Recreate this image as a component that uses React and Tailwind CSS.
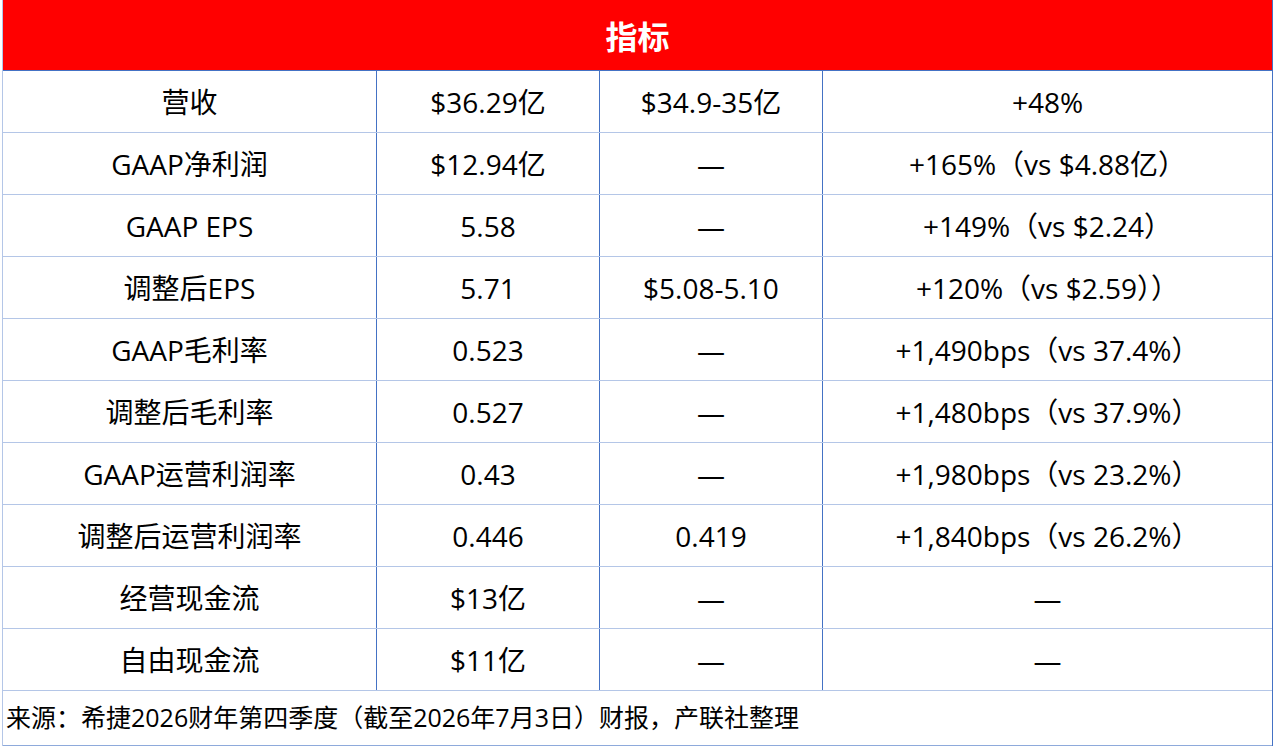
const rows = [
  ["营收", "$36.29亿", "$34.9-35亿", "+48%"],
  ["GAAP净利润", "$12.94亿", "—", "+165%（vs $4.88亿）"],
  ["GAAP EPS", "5.58", "—", "+149%（vs $2.24）"],
  ["调整后EPS", "5.71", "$5.08-5.10", "+120%（vs $2.59））"],
  ["GAAP毛利率", "0.523", "—", "+1,490bps（vs 37.4%）"],
  ["调整后毛利率", "0.527", "—", "+1,480bps（vs 37.9%）"],
  ["GAAP运营利润率", "0.43", "—", "+1,980bps（vs 23.2%）"],
  ["调整后运营利润率", "0.446", "0.419", "+1,840bps（vs 26.2%）"],
  ["经营现金流", "$13亿", "—", "—"],
  ["自由现金流", "$11亿", "—", "—"],
];

export default function App() {
  return (
    <div className="w-[1274px] h-[748px] bg-white font-['Open_Sans','Noto_Sans_CJK_SC',sans-serif] text-black">
      <div className="ml-[2px] w-[1271px] border-l border-r border-l-[#b4c6e7] border-r-[#4472c4]">
        <div className="h-[71px] bg-[#ff0000] border-b border-[#4472c4] flex items-center justify-center">
          <span className="text-white text-[32px] font-bold font-['Noto_Sans_CJK_SC',sans-serif]">指标</span>
        </div>
        {rows.map((r, i) => (
          <div
            key={i}
            className="grid grid-cols-[374px_223px_223px_449px] h-[62px] border-b border-[#b4c6e7] text-[28px]"
          >
            {r.map((c, j) => (
              <div
                key={j}
                className={`flex items-center justify-center ${j < 3 ? "border-r border-[#4472c4]" : ""}`}
              >
                {c}
              </div>
            ))}
          </div>
        ))}
        <div className="h-[55px] border-b border-[#8eaadb] flex items-center pl-[3px] text-[25px] whitespace-nowrap">
          来源：希捷2026财年第四季度（截至2026年7月3日）财报，产联社整理
        </div>
      </div>
    </div>
  );
}
